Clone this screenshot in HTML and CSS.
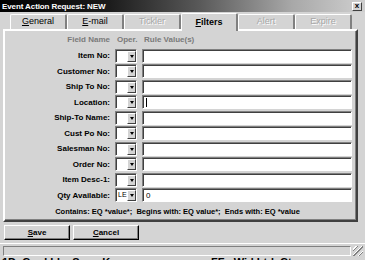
FILE: index.html
```html
<!DOCTYPE html>
<html lang="en">
<head>
  <meta charset="UTF-8" />
  <title>Event Action Request: NEW</title>
  <link rel="stylesheet" href="styles.css">
</head>
<body>
  <div class="win">
    <!-- title bar -->
    <div class="titlebar">
      <span class="title">Event Action Request: NEW</span>
      <span class="close">x</span>
    </div>

    <!-- tab strip -->
    <div class="tabs">
      <div class="tab"><u>G</u>eneral</div>
      <div class="tab"><u>E</u>-mail</div>
      <div class="tab off">Tickler</div>
      <div class="tab on"><u>F</u>ilters</div>
      <div class="tab off">Alert</div>
      <div class="tab off">Expire</div>
    </div>

    <!-- filters page -->
    <div class="panel">
      <div class="grid">
        <div class="hd lbl">Field Name</div>
        <div class="hd">Oper.</div>
        <div class="hd">Rule Value(s)</div>

        <div class="lbl">Item No:</div>
        <div class="sel"><span class="val"></span><span class="arrow"></span></div>
        <div class="inp"></div>

        <div class="lbl">Customer No:</div>
        <div class="sel"><span class="val"></span><span class="arrow"></span></div>
        <div class="inp"></div>

        <div class="lbl">Ship To No:</div>
        <div class="sel"><span class="val"></span><span class="arrow"></span></div>
        <div class="inp"></div>

        <div class="lbl">Location:</div>
        <div class="sel"><span class="val"></span><span class="arrow"></span></div>
        <div class="inp"><span class="caret"></span></div>

        <div class="lbl">Ship-To Name:</div>
        <div class="sel"><span class="val"></span><span class="arrow"></span></div>
        <div class="inp"></div>

        <div class="lbl">Cust Po No:</div>
        <div class="sel"><span class="val"></span><span class="arrow"></span></div>
        <div class="inp"></div>

        <div class="lbl">Salesman No:</div>
        <div class="sel"><span class="val"></span><span class="arrow"></span></div>
        <div class="inp"></div>

        <div class="lbl">Order No:</div>
        <div class="sel"><span class="val"></span><span class="arrow"></span></div>
        <div class="inp"></div>

        <div class="lbl">Item Desc-1:</div>
        <div class="sel"><span class="val"></span><span class="arrow"></span></div>
        <div class="inp"></div>

        <div class="lbl">Qty Available:</div>
        <div class="sel"><span class="val">LE</span><span class="arrow"></span></div>
        <div class="inp">0</div>
      </div>
      <div class="hint">Contains: EQ *value*;&nbsp; Begins with: EQ value*;&nbsp; Ends with: EQ *value</div>
    </div>

    <!-- buttons -->
    <div class="buttons">
      <div class="btn"><u>S</u>ave</div>
      <div class="btn"><u>C</u>ancel</div>
    </div>

    <!-- status bar -->
    <div class="status">
      <div class="field"></div>
      <div class="grip"></div>
    </div>

    <div class="under">1D &nbsp;Card Id &nbsp; &nbsp;Sr &nbsp; &nbsp; &nbsp;K &nbsp; &nbsp; &nbsp; &nbsp; &nbsp; &nbsp; &nbsp; &nbsp; &nbsp; &nbsp; &nbsp; &nbsp; &nbsp; &nbsp; &nbsp; &nbsp; FF &nbsp; Wid Ltd &nbsp;Ct</div>
  </div>
</body>
</html>
```

FILE: styles.css
```css
* { box-sizing: border-box; }
body { margin: 0; width: 365px; height: 260px; overflow: hidden; background: #d4d4d4; font-family: "Liberation Sans", Arial, sans-serif; }
.win { width: 365px; height: 260px; background: #d4d4d4; overflow: hidden; }

/* title bar */
.titlebar { height: 12px; display: flex; align-items: center; justify-content: space-between; padding: 0 3px 0 2px; background: linear-gradient(90deg, #000 0%, #1c1c1c 30%, #5a5a5a 55%, #a8a8a8 80%, #cfcfcf 100%); }
.title { color: #fff; font-weight: bold; font-size: 8px; letter-spacing: -0.1px; }
.close { width: 10px; height: 9px; background: #d4d4d4; border-top: 1px solid #fff; border-left: 1px solid #fff; border-right: 1px solid #404040; border-bottom: 1px solid #404040; font-size: 8px; font-weight: bold; line-height: 6px; text-align: center; color: #000; }

/* tabs */
.tabs { display: flex; padding: 2px 0 0 10px; height: 17px; align-items: flex-end; }
.tab { width: 57px; height: 15px; border-top: 1px solid #fff; border-left: 1px solid #fff; border-right: 2px solid #808080; border-radius: 2px 2px 0 0; font-size: 9px; text-align: center; line-height: 13px; color: #000; }
.tab u { text-decoration: underline; }
.tab.off { color: #a8a8a8; text-shadow: 1px 1px 0 #fff; }
.tab.on { height: 18px; margin-bottom: -2px; background: #d4d4d4; position: relative; z-index: 1; font-weight: bold; line-height: 16px; }

/* page */
.panel { margin: 0 7px 0 3px; height: 193px; border-top: 2px solid #fff; border-left: 2px solid #fff; border-right: 2px solid #404040; border-bottom: 2px solid #404040; box-shadow: inset -1px -1px 0 #808080; padding: 4px 0 0 0; }
.grid { display: grid; grid-template-columns: 105px 22px 210px; grid-template-rows: 13px repeat(10, 15.5px); column-gap: 5px; align-items: center; }
.hd { font-size: 8px; font-weight: bold; color: #7a7a7a; align-self: start; line-height: 10px; padding-left: 2px; }
.lbl { font-size: 8px; font-weight: bold; text-align: right; color: #000; }
.hd.lbl { color: #7a7a7a; padding-left: 0; }
.sel, .inp { height: 14px; background: #fff; border-top: 1px solid #808080; border-left: 1px solid #808080; border-right: 1px solid #fff; border-bottom: 1px solid #fff; box-shadow: inset 1px 1px 0 #404040; }
.sel { display: flex; }
.sel .val { flex: 1; font-size: 7px; padding: 2px 0 0 2px; }
.sel .arrow { width: 9px; margin: 1px 0 0 0; background: #d4d4d4; border-top: 1px solid #fff; border-left: 1px solid #fff; border-right: 1px solid #404040; border-bottom: 1px solid #404040; display: flex; align-items: center; justify-content: center; }
.sel .arrow::after { content: ""; border-left: 2px solid transparent; border-right: 2px solid transparent; border-top: 3px solid #000; }
.inp { font-size: 8px; padding: 2px 0 0 3px; }
.caret { display: inline-block; width: 1px; height: 9px; background: #000; }
.hint { margin-top: 4px; font-size: 7.5px; font-weight: bold; text-align: center; line-height: 10px; padding-right: 6px; }

/* buttons */
.buttons { display: flex; gap: 3px; padding: 3px 0 0 4px; }
.btn { width: 66px; height: 15px; border-top: 1px solid #fff; border-left: 1px solid #fff; border-right: 1px solid #000; border-bottom: 1px solid #000; box-shadow: inset -1px -1px 0 #808080; font-size: 8px; font-weight: bold; text-align: center; line-height: 13px; }

/* status */
.status { display: flex; margin-top: 3px; border-top: 1px solid #fff; height: 13px; padding: 2px 2px 0 3px; gap: 2px; }
.field { flex: 1; height: 10px; border-top: 1px solid #808080; border-left: 1px solid #808080; border-right: 1px solid #fff; border-bottom: 1px solid #fff; }
.grip { width: 10px; height: 10px; background: repeating-linear-gradient(135deg, #d4d4d4 0 2px, #fff 2px 3px, #808080 3px 4px); }
.under { font-size: 11px; font-weight: bold; color: #000; white-space: nowrap; padding-left: 2px; margin-top: 0; line-height: 12px; }
```
